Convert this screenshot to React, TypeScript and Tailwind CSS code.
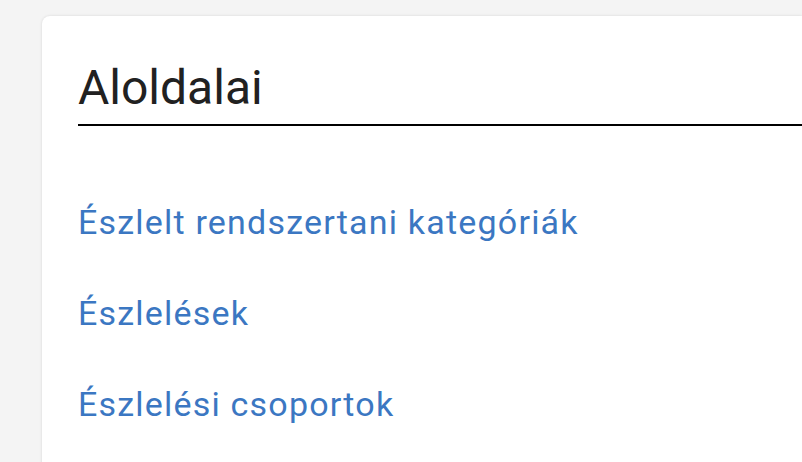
import React from "react";

export default function App() {
  const links = [
    "Észlelt rendszertani kategóriák",
    "Észlelések",
    "Észlelési csoportok",
  ];
  return (
    <div
      className="w-[802px] h-[462px] overflow-hidden bg-[#f4f4f4] pl-[42px] pt-[16px]"
      style={{ fontFamily: "Roboto, 'Noto Sans', sans-serif" }}
    >
      <div className="h-[500px] bg-white rounded-tl-[8px] shadow-[0_0_3px_rgba(0,0,0,0.12)] pl-[36px]">
        <h1 className="pt-[44px] pb-[8px] text-[48px] leading-[56px] text-[#212121] font-normal border-b-2 border-black">
          Aloldalai
        </h1>
        <ul className="pt-[76px] flex flex-col gap-[51px]">
          {links.map((l) => (
            <li key={l}>
              <a href="#" className="text-[34px] leading-[40px] tracking-[1.2px] text-[#3b77c2]">
                {l}
              </a>
            </li>
          ))}
        </ul>
      </div>
    </div>
  );
}
